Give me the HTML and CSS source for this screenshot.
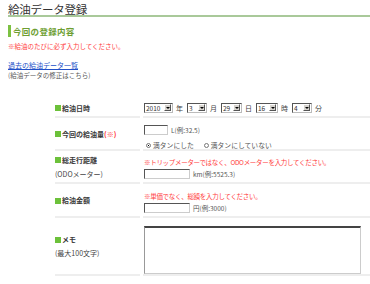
FILE: index.html
```html
<!DOCTYPE html>
<html lang="ja">
<head>
<meta charset="utf-8">
<link rel="stylesheet" href="styles.css">
</head>
<body>
<h1 class="title">給油データ登録</h1>
<h2 class="sec">今回の登録内容</h2>
<p class="note">※給油のたびに必ず入力してください。</p>
<p class="links"><a href="#" class="link">過去の給油データ一覧</a><br><span class="sub">(給油データの修正はこちら)</span></p>

<div class="form">
  <div class="lab"><span><i class="sq"></i>給油日時</span></div>
  <div class="val row1">
    <span class="sel w29"><span class="st">2010</span><span class="arr"></span></span><span class="u">年</span>
    <span class="sel w20"><span class="st">3</span><span class="arr"></span></span><span class="u">月</span>
    <span class="sel w21"><span class="st">29</span><span class="arr"></span></span><span class="u">日</span>
    <span class="sel w22"><span class="st">16</span><span class="arr"></span></span><span class="u">時</span>
    <span class="sel w20"><span class="st">4</span><span class="arr"></span></span><span class="u">分</span>
  </div>

  <div class="lab"><span><i class="sq"></i>今回の給油量<em class="req">(※)</em></span></div>
  <div class="val row2">
    <div class="line"><input class="inp w24" type="text"><span class="hint">L(例:32.5)</span></div>
    <div class="line radios"><span class="rad on"></span><span class="rl">満タンにした</span><span class="rad"></span><span class="rl">満タンにしていない</span></div>
  </div>

  <div class="lab"><span><i class="sq"></i>総走行距離</span><span class="paren">(ODOメーター)</span></div>
  <div class="val row3">
    <div class="red">※トリップメーターではなく、ODOメーターを入力してください。</div>
    <div class="line"><input class="inp w46" type="text"><span class="hint">km(例:5525.3)</span></div>
  </div>

  <div class="lab"><span><i class="sq"></i>給油金額</span></div>
  <div class="val row4">
    <div class="red">※単価でなく、総額を入力してください。</div>
    <div class="line"><input class="inp w46" type="text"><span class="hint">円(例:3000)</span></div>
  </div>

  <div class="lab"><span><i class="sq"></i>メモ</span><span class="paren">(最大100文字)</span></div>
  <div class="val row5">
    <textarea class="memo"></textarea>
  </div>
</div>
</body>
</html>
```

FILE: styles.css
```css
html, body {
  margin: 0;
  padding: 0;
  background: #fff;
}
body {
  padding: 3px 0 0 8px;
  font-family: "Noto Sans CJK JP", "Noto Sans", sans-serif;
  font-size: 6.5px;
  color: #4a4a4a;
}
.title {
  margin: 0;
  font-size: 11.5px;
  line-height: 12px;
  font-weight: normal;
  color: #333;
  letter-spacing: -0.2px;
  border-bottom: 2px solid #a9c99a;
}
.sec {
  margin: 8px 0 0 0;
  font-size: 8.5px;
  line-height: 12px;
  font-weight: bold;
  color: #6e9e32;
  border-left: 3px solid #7cc142;
  padding-left: 2px;
  letter-spacing: 0.3px;
}
.note {
  margin: 5px 0 0 0;
  color: #ff3b3b;
  line-height: 9px;
}
.links {
  margin: 9px 0 0 0;
  line-height: 10px;
}
.link {
  color: #2250c8;
  text-decoration: underline;
  font-size: 7px;
}
.sub {
  color: #555;
}
.form {
  margin: 19px 0 0 47px;
  display: grid;
  grid-template-columns: 85px 1fr;
  column-gap: 3px;
}
.lab {
  display: flex;
  flex-direction: column;
  justify-content: center;
  border-bottom: 2px solid #eeeeee;
  font-weight: bold;
  color: #3a3a3a;
  font-size: 7px;
  line-height: 14px;
}
.lab .paren {
  font-weight: normal;
  color: #444;
}
.sq {
  display: inline-block;
  width: 6px;
  height: 6px;
  background: #6cc13a;
  margin-right: 1px;
  vertical-align: -0.5px;
}
.req {
  font-style: normal;
  color: #ff3333;
}
.val {
  border-bottom: 2px solid #eeeeee;
  padding-left: 1px;
  display: flex;
  flex-direction: column;
}
.row1 {
  flex-direction: row;
  align-items: center;
  height: 17px;
}
.row2 { height: 33px; padding-top: 7px; box-sizing: border-box; }
.row3 { height: 33px; padding-top: 7px; box-sizing: border-box; }
.row4 { height: 34px; padding-top: 8px; box-sizing: border-box; }
.row5 { height: 58px; padding-top: 8px; box-sizing: border-box; }
.sel {
  display: inline-flex;
  align-items: center;
  justify-content: space-between;
  height: 10px;
  box-sizing: border-box;
  border: 1px solid;
  border-color: #555 #bbb #bbb #555;
  background: #fff;
  color: #333;
  padding: 0 1px;
}
.st { line-height: 8px; font-size: 6.5px; }
.arr {
  width: 7px;
  height: 7px;
  background: #d6d3ce;
  border: 1px solid;
  border-color: #fff #555 #555 #fff;
  box-sizing: border-box;
  position: relative;
}
.arr::after {
  content: "";
  position: absolute;
  left: 0.5px;
  top: 1.5px;
  border-left: 2px solid transparent;
  border-right: 2px solid transparent;
  border-top: 2px solid #000;
}
.w29 { width: 29px; }
.w20 { width: 20px; }
.w21 { width: 21px; }
.w22 { width: 22px; }
.u {
  margin: 0 4px 0 3px;
  color: #444;
  font-size: 7px;
}
.line {
  display: flex;
  align-items: center;
}
.inp {
  height: 10px;
  box-sizing: border-box;
  border: 1px solid;
  border-color: #555 #ccc #ccc #555;
  padding: 0;
  margin: 0;
  background: #fff;
}
.w24 { width: 24px; }
.w46 { width: 46px; }
.hint {
  margin-left: 3px;
  color: #555;
}
.radios {
  margin-top: 5px;
  padding-left: 2px;
}
.rad {
  display: inline-block;
  width: 5px;
  height: 5px;
  box-sizing: border-box;
  border-radius: 50%;
  border: 1px solid #777;
  background: #fff;
  position: relative;
}
.rad.on::after {
  content: "";
  position: absolute;
  left: 1px;
  top: 1px;
  width: 1px;
  height: 1px;
  background: #000;
}
.rl {
  margin: 0 10px 0 2px;
  color: #555;
  font-size: 6.8px;
}
.red {
  color: #ff3b3b;
  line-height: 9px;
  margin-bottom: 2px;
  letter-spacing: -0.3px;
}
.memo {
  width: 217px;
  height: 48px;
  box-sizing: border-box;
  border: 1px solid;
  border-top: 2px solid #444;
  border-color: #444 #ccc #ccc #999;
  margin: 0;
  padding: 0;
  resize: none;
}
```
